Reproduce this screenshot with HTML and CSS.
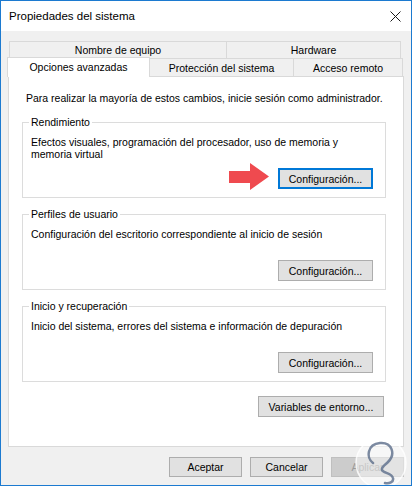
FILE: index.html
```html
<!DOCTYPE html>
<html lang="es">
<head>
    <meta charset="UTF-8">
    <meta name="viewport" content="width=device-width, initial-scale=1.0">
    <title>Propiedades del sistema</title>
    <link rel="stylesheet" href="styles.css">
</head>
<body>
<div class="window">
    <div class="titlebar">
        <span class="title">Propiedades del sistema</span>
        <svg class="close" width="11" height="11" viewBox="0 0 11 11">
            <path d="M0.5 0.5 L10.5 10.5 M10.5 0.5 L0.5 10.5" stroke="#1a1a1a" stroke-width="1" fill="none"/>
        </svg>
    </div>

    <div class="dialog">
        <div class="tabs">
            <div class="tab-row back">
                <div class="tab tab-nombre">Nombre de equipo</div>
                <div class="tab tab-hardware">Hardware</div>
            </div>
            <div class="tab-row front">
                <div class="tab active tab-opciones">Opciones avanzadas</div>
                <div class="tab tab-proteccion">Protección del sistema</div>
                <div class="tab tab-acceso">Acceso remoto</div>
            </div>
        </div>

        <div class="panel">
            <p class="intro">Para realizar la mayoría de estos cambios, inicie sesión como administrador.</p>

            <fieldset class="group">
                <legend>Rendimiento</legend>
                <p class="desc">Efectos visuales, programación del procesador, uso de memoria y<br>memoria virtual</p>
                <div class="actions">
                    <svg class="arrow" width="40" height="27" viewBox="0 0 40 27">
                        <path d="M0 8 H21 V0 L40 13.5 L21 27 V20 H0 Z" fill="#ef4a4f"/>
                    </svg>
                    <button class="btn default">Configuración...</button>
                </div>
            </fieldset>

            <fieldset class="group">
                <legend>Perfiles de usuario</legend>
                <p class="desc">Configuración del escritorio correspondiente al inicio de sesión</p>
                <div class="actions">
                    <button class="btn">Configuración...</button>
                </div>
            </fieldset>

            <fieldset class="group">
                <legend>Inicio y recuperación</legend>
                <p class="desc">Inicio del sistema, errores del sistema e información de depuración</p>
                <div class="actions">
                    <button class="btn">Configuración...</button>
                </div>
            </fieldset>

            <div class="env">
                <button class="btn wide">Variables de entorno...</button>
            </div>
        </div>

        <div class="footer">
            <button class="btn small">Aceptar</button>
            <button class="btn small">Cancelar</button>
            <button class="btn small" disabled>Aplicar</button>
        </div>
    </div>

    <!-- watermark -->
    <svg class="watermark" width="54" height="50" viewBox="0 0 54 50">
        <circle cx="27" cy="27" r="25" fill="rgba(255,255,255,0.45)" stroke="rgba(255,255,255,0.8)" stroke-width="1.5"/>
        <path d="M19 27 C12 22, 13 8, 26 7 C38 6, 42 18, 34 26 C31 29, 27 31, 28 34 C29 37, 38 37, 39 42 C40 46, 35 48, 31 47"
              fill="none" stroke="#5b6d8a" stroke-width="2.5" stroke-linecap="round" opacity="0.8"/>
    </svg>
</div>
</body>
</html>
```

FILE: styles.css
```css
* {
    margin: 0;
    padding: 0;
    box-sizing: border-box;
}

body {
    width: 412px;
    height: 486px;
    font-family: "Liberation Sans", Arial, sans-serif;
    font-size: 10.5px;
    line-height: 12px;
    color: #000;
    background: #fff;
}

.window {
    position: relative;
    width: 412px;
    height: 486px;
    border: 1px solid #1c7ad0;
    display: flex;
    flex-direction: column;
    overflow: hidden;
}

.titlebar {
    height: 30px;
    background: #fff;
    display: flex;
    align-items: center;
    justify-content: space-between;
    padding: 0 10px 0 8px;
}

.title {
    font-size: 11.5px;
}

.dialog {
    flex: 1;
    background: #f0f0f0;
    padding: 10px 7px 0 7px;
    display: flex;
    flex-direction: column;
}

/* tabs */
.tab-row {
    display: flex;
}

.tab-row.back {
    height: 17px;
    margin: 0 3px 0 1px;
}

.tab-row.front {
    height: 18px;
    margin: 0 1px 0 -1px;
}

.tab {
    border: 1px solid #d9d9d9;
    border-bottom: none;
    background: #f0f0f0;
    text-align: center;
    white-space: nowrap;
}

.tab + .tab {
    margin-left: -1px;
}

.tab-row.back .tab {
    padding-top: 2px;
}

.tab-row.front .tab {
    padding-top: 3px;
}

.tab-row.front .tab.active {
    position: relative;
    z-index: 1;
    background: #fff;
    margin-top: -1px;
    margin-bottom: -1px;
    padding-top: 3px;
}

.tab-nombre { width: 218px; }
.tab-hardware { flex: 1; }
.tab-opciones { width: 143px; }
.tab-proteccion { width: 145px; }
.tab-acceso { flex: 1; }

/* panel */
.panel {
    flex: 1;
    background: #fff;
    border: 1px solid #d9d9d9;
    padding: 15px 17px 0 13px;
}

.intro {
    padding-left: 4px;
    margin-bottom: 12px;
}

.group {
    border: 1px solid #dcdcdc;
    padding: 8px 12px 8px 8px;
    min-width: 0;
}

.group + .group {
    margin-top: 10px;
}

.group legend {
    padding: 0 2px;
    margin-left: -2px;
    line-height: 12px;
}

.desc {
    height: 24px;
    margin-bottom: 8px;
}

.actions {
    display: flex;
    justify-content: flex-end;
    align-items: center;
    gap: 9px;
}

.arrow {
    margin: -5px 0 -1px 0;
}

.env {
    display: flex;
    justify-content: flex-end;
    padding-right: 2px;
    margin-top: 14px;
}

/* buttons */
.btn {
    height: 21px;
    width: 95px;
    font-family: inherit;
    font-size: 10.5px;
    color: #000;
    background: #e1e1e1;
    border: 1px solid #adadad;
}

.btn.default {
    border-color: #0078d7;
    box-shadow: inset 0 0 0 1px #0078d7;
}

.btn.wide {
    width: 126px;
}

.btn.small {
    width: 73px;
    height: 20px;
}

.btn:disabled {
    background: #cccccc;
    border-color: #bfbfbf;
    color: #9a9a9a;
}

.footer {
    height: 38px;
    display: flex;
    justify-content: flex-end;
    gap: 8px;
    padding-top: 10px;
}

.watermark {
    position: absolute;
    left: 353px;
    top: 435px;
}
```
